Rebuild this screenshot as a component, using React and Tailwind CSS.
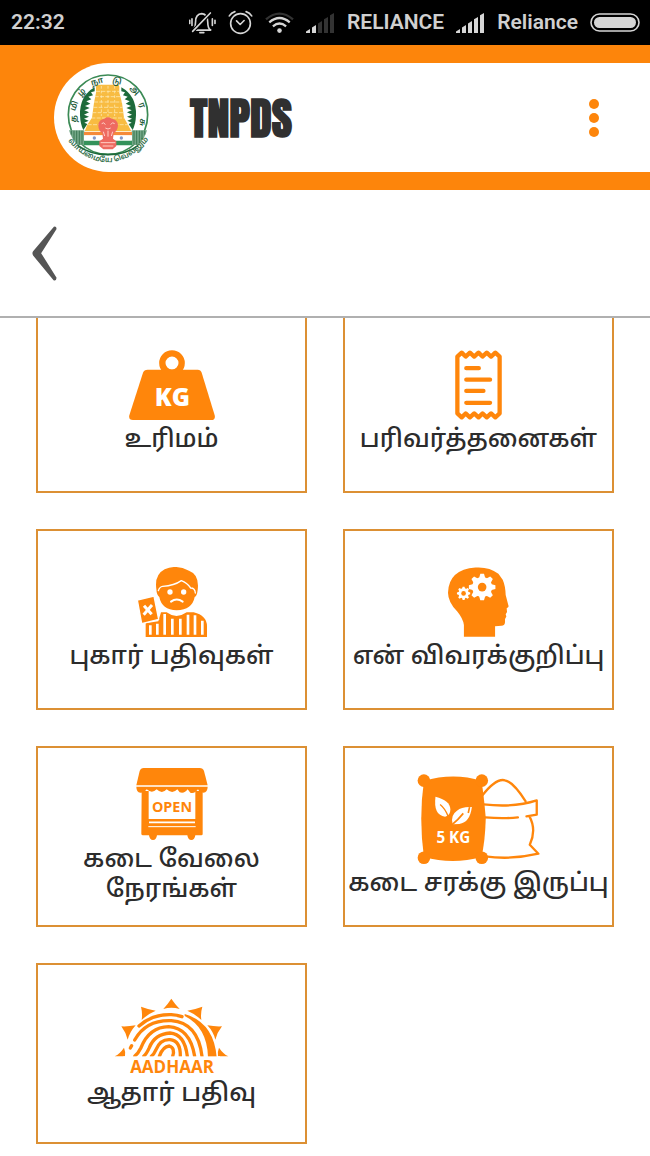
import React from "react";

const ORANGE = "#ff860b";
const TAMIL = "font-['Noto_Sans_Tamil','Noto_Sans',sans-serif]";

function MutedBell() {
  return (
    <svg viewBox="576 32 82 70" className="h-[23px] w-[27px]" fill="none" stroke="#d6d6d6" strokeWidth="5" strokeLinecap="round">
      <path d="M590 90 H642 C635 86 633 78 633 66 C633 50 626 41 615 40 C602 41 596 50 596 64 C596 76 594 84 590 90 Z" strokeLinejoin="round" />
      <path d="M587 94 L641 38" stroke="#000" strokeWidth="11" />
      <path d="M587 94 L641 38" />
      <path d="M609 98 H621" />
      <path d="M578 60 V70 M585 56 V76 M647 56 V76 M655 60 V70" />
    </svg>
  );
}

function AlarmClock() {
  return (
    <svg viewBox="692 28 76 76" className="size-[25px]" fill="none" stroke="#d6d6d6" strokeWidth="5" strokeLinecap="round" strokeLinejoin="round">
      <circle cx="730" cy="69" r="30" />
      <path d="M718 61 L729 72 L741 60" />
      <path d="M696 46 Q702 36 713 33 M764 46 Q758 36 747 33" />
    </svg>
  );
}

function Wifi() {
  return (
    <svg viewBox="808 34 88 66" className="h-[22px] w-[29px]" fill="none" stroke="#d6d6d6" strokeWidth="7">
      <path d="M811 56 Q852 21 893 56" stroke="#333" />
      <path d="M821 65 Q852 39 883 65" />
      <path d="M832 77 Q852 60 872 77" />
      <circle cx="852" cy="90" r="7" fill="#d6d6d6" stroke="none" />
    </svg>
  );
}

function Signal({ bars }) {
  const xs = [0, 6, 12, 18, 24];
  return (
    <svg viewBox="0 0 29 20" className="h-5 w-[29px]">
      {xs.map((x, i) => (
        <path
          key={x}
          d={`M${x} 20 V${18.6 - i * 4.1} L${x + 4} ${16 - i * 4} V20 Z`}
          fill={i < bars ? "#d6d6d6" : "#333"}
        />
      ))}
    </svg>
  );
}

function Battery() {
  return (
    <svg viewBox="0 0 50 19" className="h-[19px] w-[50px]">
      <rect x="1" y="1" width="48" height="17" rx="8.5" fill="none" stroke="#d6d6d6" strokeWidth="1.6" />
      <rect x="4" y="4" width="42" height="11" rx="5.5" fill="#d6d6d6" />
    </svg>
  );
}

function Emblem() {
  const letters = [
    ["த", 103, 188, -88],
    ["மி", 104, 150, -68],
    ["ழ்", 126, 110, -45],
    ["நா", 172, 78, -16],
    ["டு", 231, 77, 14],
    ["அ", 283, 104, 45],
    ["ர", 305, 148, 70],
    ["சு", 306, 199, 95],
  ];
  return (
    <svg viewBox="78 45 252 279" className="h-[93px] w-[84px]" role="img" aria-label="Tamil Nadu emblem">
      <circle cx="204" cy="176" r="119" fill="#fff" stroke="#3b8a55" strokeWidth="5" />
      <path d="M164 94 Q118 120 120 178 Q121 205 130 222 L142 204 L133 200 L146 194 L132 188 L147 182 L132 176 L147 169 L133 163 L149 156 L135 150 L151 143 L139 136 L154 130 L145 122 L159 118 L153 109 L164 106 Z" fill="#1d6a3a" />
      <path d="M244 94 Q290 120 288 178 Q287 205 278 222 L266 204 L275 200 L262 194 L276 188 L261 182 L276 176 L261 169 L275 163 L259 156 L273 150 L257 143 L269 136 L254 130 L263 122 L249 118 L255 109 L244 106 Z" fill="#1d6a3a" />
      <path d="M87 223 H133 V267 H112 Q94 248 87 223 Z" fill="#74a888" />
      <path d="M321 223 H275 V267 H296 Q314 248 321 223 Z" fill="#74a888" />
      <path d="M94 224 V236 M102 224 V252 M110 224 V262 M118 224 V266 M126 224 V266 M282 224 V266 M290 224 V266 M298 224 V262 M306 224 V252 M314 224 V236" stroke="#3c7853" strokeWidth="3" />
      <path d="M168 92 L170 86 H236 L238 92 V110 L246 140 L252 185 L264 206 L274 226 H134 L142 206 L156 185 L162 140 L168 110 Z" fill="#f8bc42" />
      <path d="M168 106 H238 M164 122 H242 M162 138 H246 M160 154 H248 M157 170 H251 M154 186 H254 M143 206 H265" stroke="#fff0c2" strokeWidth="2" strokeDasharray="12 4" />
      <path d="M184 90 V180 M204 90 V180 M224 90 V180" stroke="#fff0c2" strokeWidth="2" strokeDasharray="8 6" />
      <rect x="132" y="228" width="144" height="10" fill="#f58a3a" />
      <rect x="132" y="238" width="144" height="16" fill="#fff" />
      <path d="M132 254 H276 V268 H132 Z" fill="#34925a" />
      <path d="M113 268 Q150 296 204 296 Q258 296 295 268" fill="none" stroke="#1d6a3a" strokeWidth="5" />
      <circle cx="163" cy="246" r="5" fill="#8598c6" />
      <circle cx="244" cy="246" r="5" fill="#8598c6" />
      <path d="M175 208 Q176 190 193 188 Q204 180 215 188 Q233 190 234 208 Q233 224 221 232 L219 248 L229 256 V270 L218 280 H190 L178 270 V256 L189 248 L187 232 Q175 224 175 208 Z" fill="#ee6a61" />
      <path d="M185 203 Q192 196 196 206 M212 206 Q217 196 224 203 M196 216 Q204 222 212 216 M190 227 L194 240 M204 224 V242 M218 227 L214 240 M182 260 H226 M188 270 H220" stroke="#ffd0c6" strokeWidth="3" fill="none" />
      <g fill="#245c3a" className={`${TAMIL} font-semibold`} fontSize="25" textAnchor="middle">
        {letters.map(([t, x, y, a]) => (
          <text key={t} x={x} y={y} transform={`rotate(${a} ${x} ${y})`} dominantBaseline="central">
            {t}
          </text>
        ))}
      </g>
      <path id="motto" d="M84 254 Q140 320 206 318 Q272 316 326 250" fill="none" />
      <text className={`${TAMIL} font-semibold`} fontSize="23" fill="#2f6d48">
        <textPath href="#motto" startOffset="50%" textAnchor="middle">வாய்மையே வெல்லும்</textPath>
      </text>
    </svg>
  );
}

function WeightIcon() {
  return (
    <svg viewBox="84 41 258 210" className="h-[70px] w-[86px]">
      <circle cx="213" cy="80" r="29" fill="none" stroke={ORANGE} strokeWidth="19" />
      <path d="M140 100 H290 Q299 100 302 109 L341 237 Q344 251 331 251 H96 Q82 251 85 237 L126 109 Q129 100 140 100 Z" fill={ORANGE} />
      <text x="214" y="208" textAnchor="middle" fontSize="74" fill="#fff" className="font-['Open_Sans',sans-serif] font-extrabold">KG</text>
    </svg>
  );
}

function ReceiptIcon() {
  return (
    <svg viewBox="329 41 142 212" className="h-[70px] w-[47px]" fill="none" stroke={ORANGE} strokeLinejoin="round" strokeLinecap="round">
      <path d="M336 61 L349 49 L361 61 L374 49 L387 61 L400 49 L412 61 L425 49 L438 61 L451 49 L464 61 V233 L451 245 L438 233 L425 245 L412 233 L400 245 L387 233 L374 245 L361 233 L349 245 L336 233 Z" strokeWidth="13" />
      <path d="M363 96 H401 M363 131 H435 M363 165 H415 M363 201 H435" strokeWidth="13" />
    </svg>
  );
}

function ComplaintIcon() {
  return (
    <svg viewBox="228 35 210 210" className="size-[70px]">
      <path d="M286 101 Q280 58 311 42 Q345 26 384 46 Q416 58 410 104 Q408 122 401 125 Q394 163 347 165 Q302 163 295 125 Q287 120 286 101 Z" fill={ORANGE} />
      <path d="M292 106 Q296 94 305 93 Q340 91 361 76 Q378 82 389 98 Q402 98 403 113" fill="none" stroke="#fff" strokeWidth="4" strokeLinecap="round" />
      <circle cx="327" cy="110" r="8" fill="#fff" />
      <circle cx="368" cy="110" r="8" fill="#fff" />
      <path d="M330 139 Q347 126 365 139" fill="none" stroke="#fff" strokeWidth="6" strokeLinecap="round" />
      <path d="M254 245 V204 L292 198 L300 171 H317 Q346 193 377 171 H398 Q438 181 438 213 V245 Z" fill={ORANGE} />
      <path d="M268 210 V238 M289 205 V238 M311 176 V238 M334 190 V238 M358 190 V238 M381 178 V238 M402 180 V238 M424 196 V238" stroke="#fff" strokeWidth="8" />
      <path d="M229 134 L279 122 L293 192 L242 205 Z" fill={ORANGE} stroke="#fff" strokeWidth="4" />
      <path d="M249 151 L272 177 M273 149 L248 178" stroke="#fff" strokeWidth="9" />
    </svg>
  );
}

function Gear({ cx, cy, r, hole }) {
  return (
    <g>
      <circle cx={cx} cy={cy} r={r * 0.76} fill="#fff" />
      {[0, 45, 90, 135, 180, 225, 270, 315].map((a) => (
        <path
          key={a}
          d={`M${cx - r * 0.24} ${cy - r * 0.65} L${cx - r * 0.14} ${cy - r} H${cx + r * 0.14} L${cx + r * 0.24} ${cy - r * 0.65} Z`}
          transform={`rotate(${a} ${cx} ${cy})`}
          fill="#fff"
        />
      ))}
      <circle cx={cx} cy={cy} r={hole} fill={ORANGE} />
    </g>
  );
}

function ProfileIcon() {
  return (
    <svg viewBox="307 35 184 210" className="h-[70px] w-[61px]">
      <path d="M355 245 V209 Q352 190 335 169 Q307 140 307 112 Q309 42 390 36 Q431 33 459 55 L472 73 Q480 91 481 119 L489 150 Q492 156 484 159 L485 170 L481 177 L483 184 L479 191 V200 Q479 211 468 212 L449 213 V245 Z" fill={ORANGE} />
      <Gear cx={410} cy={95} r={40} hole={13} />
      <Gear cx={354} cy={114} r={20} hole={7} />
    </svg>
  );
}

function ShopIcon() {
  return (
    <svg viewBox="195 39 216 216" className="size-[72px]">
      <path d="M218 39 H386 Q396 39 399 48 L410 91 H196 L206 48 Q209 39 218 39 Z" fill={ORANGE} />
      <path d="M196 95 H410 Q410 111 397 113 Q386 113 381 103 Q371 117 358 113 L350 103 Q340 117 326 112 L319 103 Q304 119 287 103 Q273 119 257 103 Q243 117 227 103 Q219 114 208 113 Q196 111 196 95 Z" fill={ORANGE} />
      <path d="M212 108 H233 V192 H373 V108 H395 V237 Q395 241 391 241 H373 Q371 255 361 255 Q351 255 349 241 H258 Q256 255 246 255 Q236 255 234 241 H216 Q211 241 211 236 Z" fill={ORANGE} />
      <path d="M234 202 H372" stroke="#fff" strokeWidth="5" />
      <path d="M232 215 H374" stroke="#fff" strokeWidth="3" />
      <text x="303" y="171" textAnchor="middle" fontSize="43" fill={ORANGE} className="font-['Open_Sans',sans-serif] font-bold">OPEN</text>
    </svg>
  );
}

function SackIcon() {
  return (
    <svg viewBox="215 56 370 272" className="h-[90px] w-[123px]">
      <path d="M410 123 Q452 68 480 75 Q505 80 542 138 M415 148 Q510 158 576 136 V179 L545 184 M420 187 Q475 192 519 187 M554 184 Q576 225 555 270 L581 297 Q500 316 420 305" fill="none" stroke={ORANGE} strokeWidth="7" strokeLinecap="round" strokeLinejoin="round" />
      <path d="M235 77 Q325 50 409 77 Q416 118 422 190 Q420 260 409 307 Q322 331 235 307 Q219 190 235 77 Z" fill={ORANGE} />
      <circle cx="235" cy="76" r="19" fill={ORANGE} />
      <circle cx="410" cy="76" r="19" fill={ORANGE} />
      <circle cx="235" cy="309" r="19" fill={ORANGE} />
      <circle cx="410" cy="309" r="19" fill={ORANGE} />
      <path d="M270 125 Q314 136 315 163 Q315 181 299 185 Q263 181 270 125 Z" fill="#fff" />
      <path d="M284 148 Q300 161 308 184 L317 192" fill="none" stroke={ORANGE} strokeWidth="4" />
      <path d="M322 208 Q314 181 335 167 Q350 154 380 156 Q374 203 342 207 Z" fill="#fff" />
      <path d="M316 213 Q340 193 354 175 M373 156 L369 174" fill="none" stroke={ORANGE} strokeWidth="5" />
      <text x="324" y="264" textAnchor="middle" fontSize="46" fill="#fff" className="font-['Open_Sans',sans-serif] font-bold">5 KG</text>
    </svg>
  );
}

function AadhaarIcon() {
  return (
    <svg viewBox="132 38 345 228" className="h-[76px] w-[115px] overflow-visible">
      <g fill={ORANGE}>
        <path d="M280 71 Q292 58 304 40 Q316 58 329 71 Q304 64 280 71 Z" />
        <path d="M215 104 Q218 84 213 64 Q234 72 257 76 Q233 86 215 104 Z" />
        <path d="M394 104 Q391 84 397 64 Q376 72 352 76 Q376 86 394 104 Z" />
        <path d="M173 163 Q168 142 154 123 Q175 124 197 120 Q180 139 173 163 Z" />
        <path d="M436 163 Q441 142 456 123 Q434 124 412 120 Q430 139 436 163 Z" />
        <path d="M134 213 Q150 205 162 187 Q168 202 165 213 Z" />
        <path d="M475 213 Q459 205 447 187 Q441 202 444 213 Z" />
      </g>
      <g fill="none" stroke={ORANGE} strokeWidth="10" strokeLinecap="round">
        <path d="M207 122 Q247 86 304 88 Q322 89 336 94" />
        <path d="M194 164 Q228 103 304 106 Q384 112 396 213" />
        <path d="M181 188 L185 181" />
        <path d="M194 213 Q205 203 213 187 Q238 125 296 124 Q360 128 374 213" />
        <path d="M221 213 Q229 207 238 187 Q254 146 300 143 Q344 146 352 213" />
        <path d="M244 213 Q252 207 258 193 Q271 161 300 163 Q332 166 331 213" />
        <path d="M268 213 Q278 184 298 182 Q316 187 308 213" />
      </g>
      <path d="M344 86 Q432 112 440 216 H414 Q412 126 344 92 Z" fill={ORANGE} />
      <rect x="160" y="213" width="290" height="12" fill="#fff" />
      <text x="306" y="263" textAnchor="middle" fontSize="51" fill={ORANGE} className="font-['Open_Sans',sans-serif] font-bold">AADHAAR</text>
    </svg>
  );
}

const services = [
  { label: "உரிமம்", Icon: WeightIcon },
  { label: "பரிவர்த்தனைகள்", Icon: ReceiptIcon },
  { label: "புகார் பதிவுகள்", Icon: ComplaintIcon },
  { label: "என் விவரக்குறிப்பு", Icon: ProfileIcon },
  { label: "கடை வேலை நேரங்கள்", Icon: ShopIcon },
  { label: "கடை சரக்கு இருப்பு", Icon: SackIcon },
  { label: "ஆதார் பதிவு", Icon: AadhaarIcon },
];

export default function App() {
  return (
    <div className="min-h-screen bg-white text-[#2c2c2c]">
      <div className="flex h-[45px] items-center justify-between bg-black pr-[10px] pl-[11px] font-['Roboto',sans-serif] text-[21px] font-semibold text-[#d0d0d0]">
        <span>22:32</span>
        <div className="flex items-center gap-3">
          <MutedBell />
          <AlarmClock />
          <Wifi />
          <Signal bars={2} />
          <span>RELIANCE</span>
          <Signal bars={5} />
          <span>Reliance</span>
          <Battery />
        </div>
      </div>

      <header className="bg-[#fd850b] pt-[18px] pb-[18px] pl-[54px]">
        <div className="flex h-[109px] items-center rounded-l-full bg-white pr-11 pl-3">
          <Emblem />
          <h1 className="ml-10 flex-1 font-['Impact','Anton',sans-serif] text-[44px] leading-none font-black text-[#303030]">TNPDS</h1>
          <button type="button" aria-label="More options" className="flex w-6 flex-col items-center gap-1">
            <span className="size-[10px] rounded-full bg-[#fd850b]" />
            <span className="size-[10px] rounded-full bg-[#fd850b]" />
            <span className="size-[10px] rounded-full bg-[#fd850b]" />
          </button>
        </div>
      </header>

      <nav className="flex h-[128px] items-center border-b-2 border-[#b0b0b0] px-8">
        <button type="button" aria-label="Back">
          <svg viewBox="98 136 74 164" className="h-[55px] w-[25px]">
            <path d="M163 138 Q171 135 171 145 L125 217 L171 290 Q170 301 162 298 L101 224 Q97 217 101 211 Z" fill="#555" />
          </svg>
        </button>
      </nav>

      <main className="overflow-hidden px-9 pb-3">
        <div className="-mt-[6px] grid grid-cols-2 gap-9">
          {services.map(({ label, Icon }) => (
            <a
              key={label}
              href="#"
              className="flex h-[181px] flex-col items-center justify-center border-2 border-[#dc9034] text-center"
            >
              <Icon />
              <span className={`pt-[6px] text-[25px] leading-[30px] font-medium ${TAMIL}`}>{label}</span>
            </a>
          ))}
        </div>
      </main>
    </div>
  );
}
